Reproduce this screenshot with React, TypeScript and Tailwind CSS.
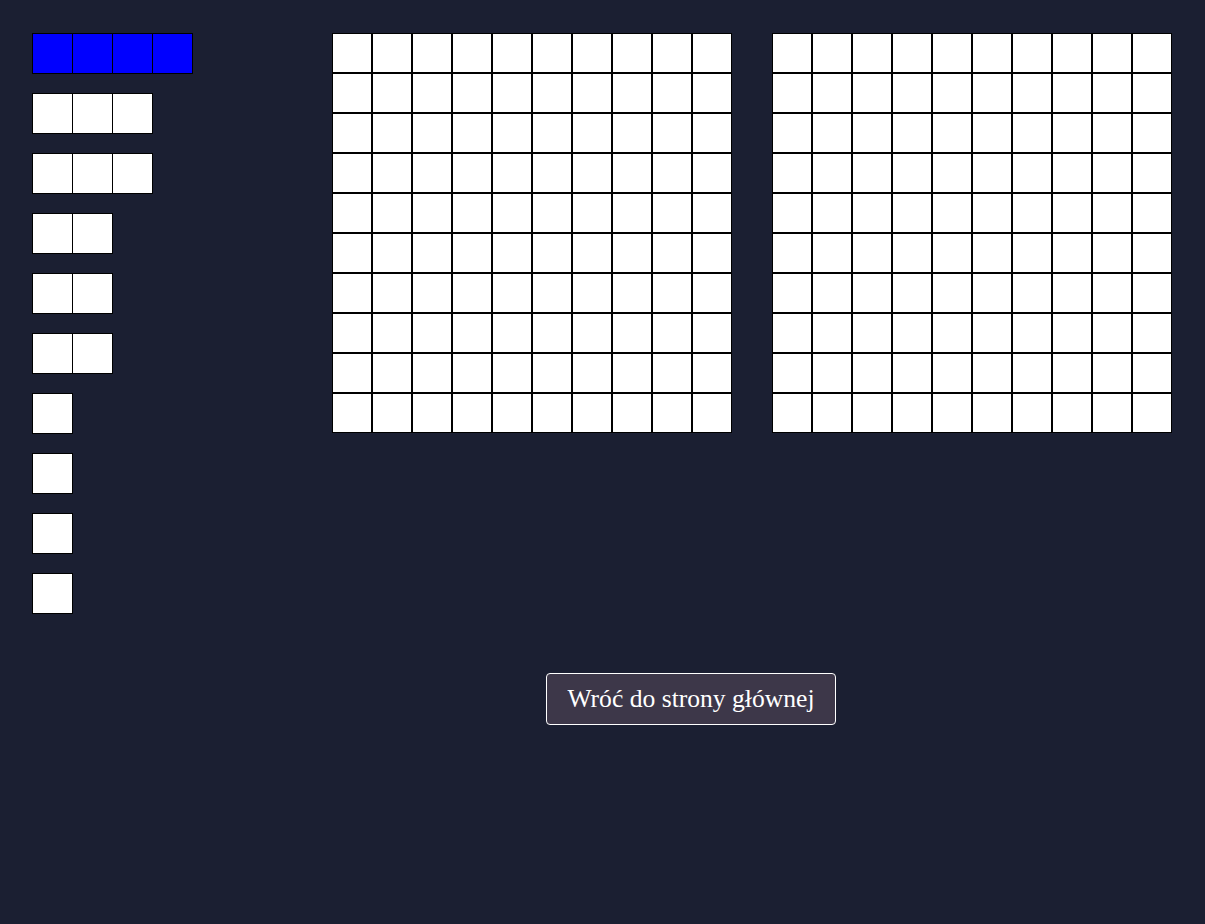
import React from "react";

const ships = [4, 3, 3, 2, 2, 2, 1, 1, 1, 1];

function Board() {
  return (
    <div className="grid grid-cols-[repeat(10,40px)] auto-rows-[40px] w-[400px] h-[400px]">
      {Array.from({ length: 100 }).map((_, i) => (
        <div key={i} className="w-10 h-10 bg-white border border-black" />
      ))}
    </div>
  );
}

export default function App() {
  return (
    <div className="min-h-[924px] w-full bg-[#1b1f32] font-['Liberation_Serif',serif]">
      <div className="flex items-start pl-8 pt-[33px]">
        <div className="flex flex-col gap-[19px] w-[300px]">
          {ships.map((n, i) => (
            <div key={i} className="flex">
              {Array.from({ length: n }).map((_, j) => (
                <div
                  key={j}
                  className={`w-[41px] h-[41px] border border-black ${j > 0 ? "-ml-px" : ""} ${i === 0 ? "bg-[#0000ff]" : "bg-white"}`}
                />
              ))}
            </div>
          ))}
        </div>
        <div className="flex items-start gap-10">
          <Board />
          <Board />
        </div>
      </div>
      <div className="pl-[546px] pt-[59px]">
        <button className="h-[52px] w-[290px] bg-[#3d3749] border border-white rounded-[4px] text-white text-[25.6px] leading-none font-['Liberation_Serif',serif]">
          Wróć do strony głównej
        </button>
      </div>
    </div>
  );
}
